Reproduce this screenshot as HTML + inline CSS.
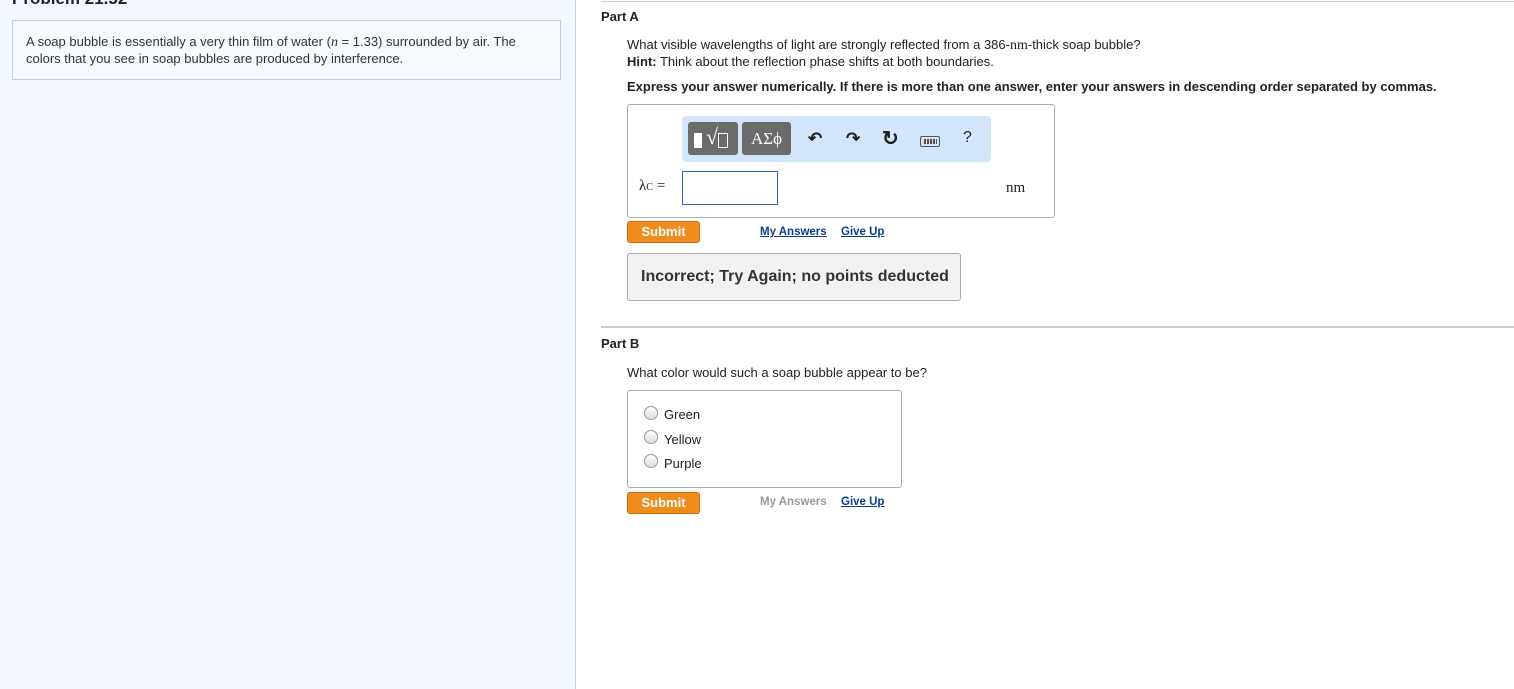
<!DOCTYPE html>
<html><head><meta charset="utf-8"><style>
*{box-sizing:border-box;margin:0;padding:0}
body{width:1514px;height:689px;overflow:hidden;background:#fff;font-family:"Liberation Sans",Arial,sans-serif;font-size:13px;color:#222;position:relative}
.abs{position:absolute}
#left{left:0;top:0;width:576px;height:689px;background:#f3f8ff;border-right:1px solid #c3d3e3}
.btn{background:#f08c1e;border:1px solid #c86e10;border-radius:3px;color:#fff;font-weight:bold;font-size:13px;text-align:center;line-height:20px}
a{color:#0a3e8c;font-weight:bold;font-size:11.5px;text-decoration:underline}
.tb{background:#6b6b6b;border-radius:3px;color:#fff;height:33px;top:122px}
.ic{top:129px;font-size:17px;color:#222;font-weight:bold}
.radio{width:14px;height:14px;border:1px solid #999;border-radius:50%;background:linear-gradient(#fff,#ddd)}
</style></head><body>
<div id="left" class="abs">
<div class="abs" style="left:12px;top:-11px;font-size:17px;font-weight:bold;color:#222">Problem 21.52</div>
<div class="abs" style="left:12px;top:20px;width:549px;height:60px;border:1px solid #bccfe0;background:#f6faff;padding:13px 13px;line-height:16px;font-size:13px;color:#333">A soap bubble is essentially a very thin film of water (<i style="font-family:'Liberation Serif',serif;font-size:14px">n</i> = 1.33) surrounded by air. The colors that you see in soap bubbles are produced by interference.</div>
</div>
<div class="abs" style="left:601px;top:1px;width:913px;height:1px;background:#ccc"></div>
<div class="abs" style="left:601px;top:9px;font-weight:bold;font-size:13px">Part A</div>
<div class="abs" style="left:627px;top:37px;font-size:13px;line-height:16px;color:#222">What visible wavelengths of light are strongly reflected from a 386-<span style="font-family:'Liberation Serif',serif;font-size:14px">nm</span>-thick soap bubble?<br><b>Hint:</b> Think about the reflection phase shifts at both boundaries.</div>
<div class="abs" style="left:627px;top:79px;font-size:13px;font-weight:bold">Express your answer numerically. If there is more than one answer, enter your answers in descending order separated by commas.</div>
<div class="abs" style="left:627px;top:104px;width:428px;height:114px;border:1px solid #aaa;border-radius:3px"></div>
<div class="abs" style="left:682px;top:116px;width:309px;height:46px;background:#d2e5fb;border-radius:4px"></div>
<div class="abs tb" style="left:688px;width:50px"><div class="abs" style="left:6px;top:11px;width:8px;height:15px;background:#fff"></div><div class="abs" style="left:18px;top:2px;font-family:'Liberation Serif',serif;font-size:22px">√</div><div class="abs" style="left:30px;top:11px;width:10px;height:15px;border:1px solid #fff"></div></div>
<div class="abs tb" style="left:742px;width:49px;font-family:'Liberation Serif',serif;font-size:17px;text-align:center;line-height:33px">ΑΣϕ</div>
<div class="abs ic" style="left:808px">↶</div>
<div class="abs ic" style="left:846px">↷</div>
<div class="abs ic" style="left:882px;font-size:20px;top:126px">↻</div>
<div class="abs" style="left:920px;top:136px;width:20px;height:11px;border:1px solid #555;border-radius:2px;background:repeating-linear-gradient(90deg,#555 0 2px,#ddd 2px 3px);background-clip:content-box;padding:2px"></div>
<div class="abs" style="left:963px;top:129px;font-size:16px">?</div>
<div class="abs" style="left:639px;top:178px;font-family:'Liberation Serif',serif;font-size:15px">λ<span style="font-size:10px">C</span> =</div>
<div class="abs" style="left:682px;top:171px;width:96px;height:34px;border:1px solid #2c64c8"></div>
<div class="abs" style="left:1006px;top:180px;font-family:'Liberation Serif',serif;font-size:15px">nm</div>
<div class="abs btn" style="left:627px;top:221px;width:73px;height:22px">Submit</div>
<a class="abs" style="left:760px;top:226px">My Answers</a>
<a class="abs" style="left:841px;top:226px">Give Up</a>
<div class="abs" style="left:627px;top:253px;width:334px;height:48px;border:1px solid #aaa;border-radius:3px;background:#f2f2f2;font-weight:bold;font-size:16px;line-height:46px;padding-left:13px;color:#333">Incorrect; Try Again; no points deducted</div>
<div class="abs" style="left:601px;top:326px;width:913px;height:2px;background:#ccc"></div>
<div class="abs" style="left:601px;top:336px;font-weight:bold;font-size:13px">Part B</div>
<div class="abs" style="left:627px;top:365px;font-size:13px">What color would such a soap bubble appear to be?</div>
<div class="abs" style="left:627px;top:390px;width:275px;height:98px;border:1px solid #aaa;border-radius:3px"></div>
<div class="abs radio" style="left:644px;top:406px"></div><div class="abs" style="left:664px;top:407px;font-size:13px">Green</div>
<div class="abs radio" style="left:644px;top:430px"></div><div class="abs" style="left:664px;top:432px;font-size:13px">Yellow</div>
<div class="abs radio" style="left:644px;top:454px"></div><div class="abs" style="left:664px;top:456px;font-size:13px">Purple</div>
<div class="abs btn" style="left:627px;top:492px;width:73px;height:22px">Submit</div>
<div class="abs" style="left:760px;top:496px;font-size:11.5px;font-weight:bold;color:#999">My Answers</div>
<a class="abs" style="left:841px;top:496px">Give Up</a>
</body></html>
